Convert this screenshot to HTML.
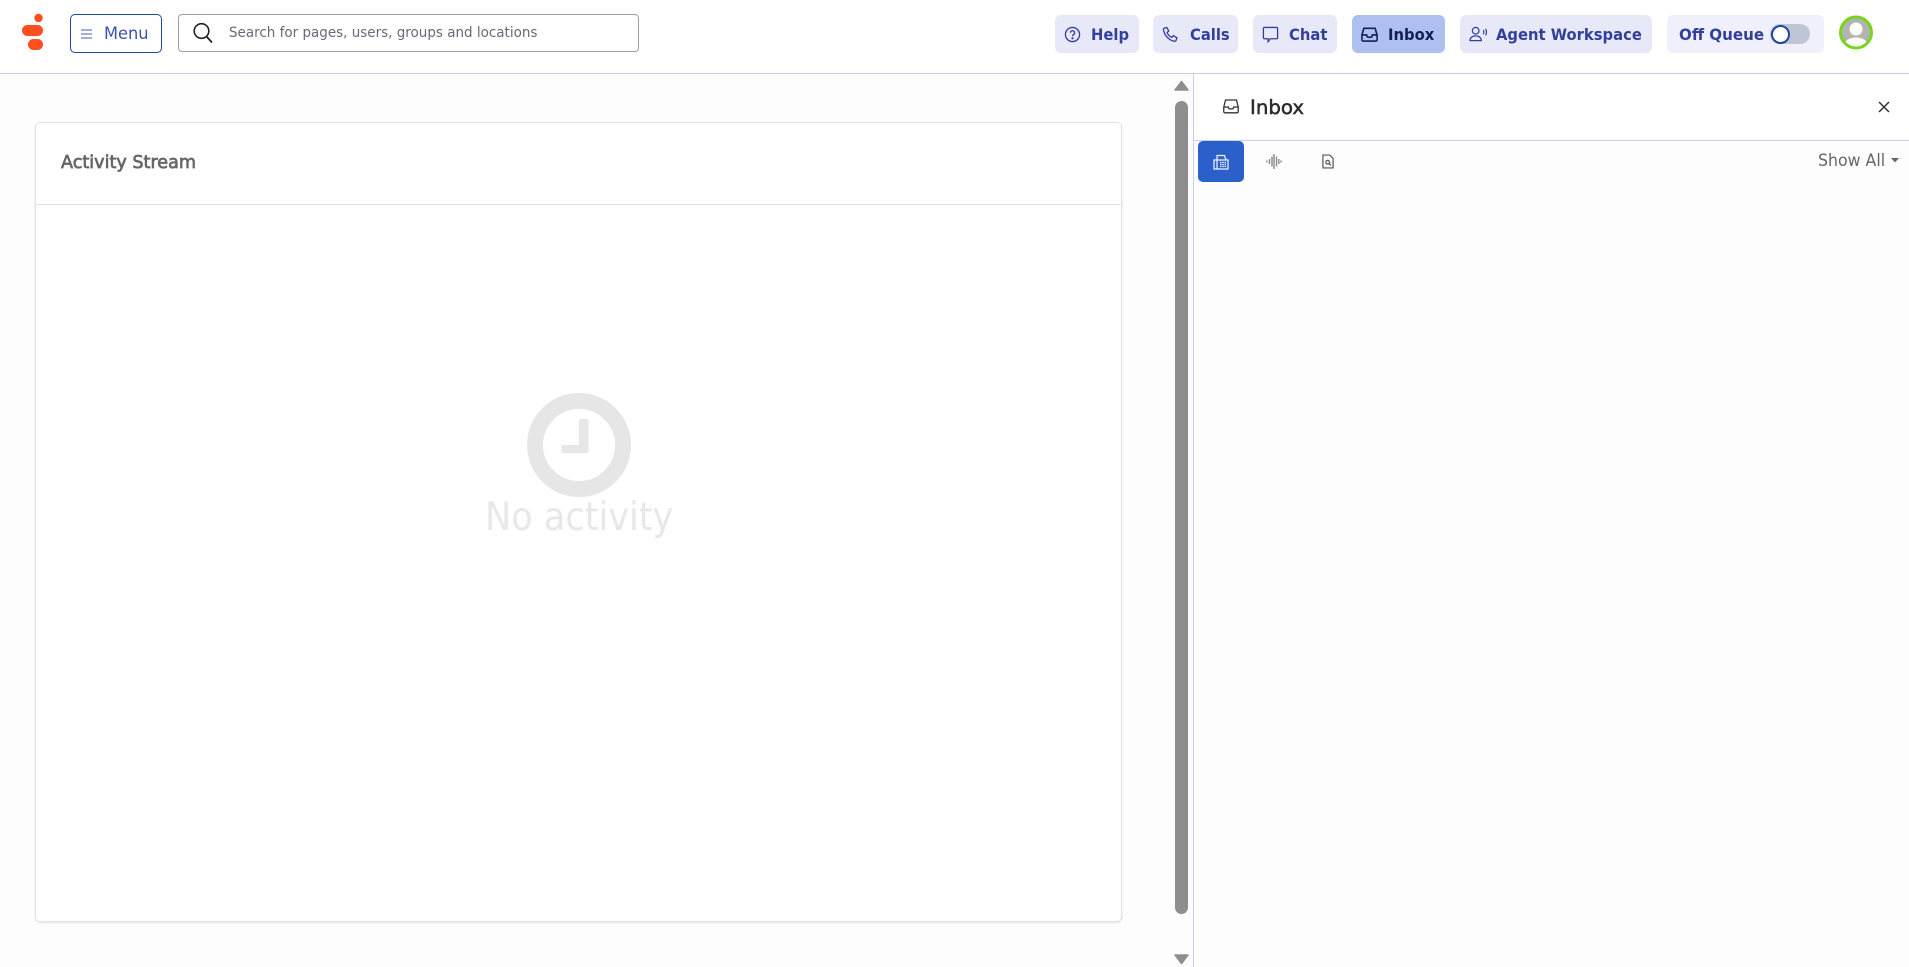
<!DOCTYPE html>
<html><head><meta charset="utf-8"><style>
*{box-sizing:border-box}
html,body{margin:0;padding:0;width:1909px;height:967px;overflow:hidden;background:#fdfdfd;font-family:"DejaVu Sans","Liberation Sans",sans-serif}
.a{position:absolute}
.btn{position:absolute;top:15px;height:38px;background:#e8e9f8;border-radius:6px;color:#33409b;font-weight:700;font-size:15.8px;line-height:39px;white-space:nowrap}
.btn svg{position:absolute;top:11px;left:9px}
.btn span{position:absolute;top:0;transform:scaleX(.935);transform-origin:0 50%}
</style></head><body>
<div class="a" style="left:0;top:0;width:1909px;height:73px;background:#fff"></div>
<div class="a" style="left:0;top:73px;width:1909px;height:1px;background:#c8d0e6"></div>
<svg class="a" style="left:20px;top:12px" width="26" height="40" viewBox="0 0 26 40"><circle cx="18.5" cy="6" r="4.2" fill="#ff4f1f"/><rect x="2" y="13" width="21" height="11" rx="5.5" fill="#ff4f1f"/><rect x="8" y="27" width="15" height="11" rx="5.5" fill="#ff4f1f"/></svg>
<div class="a" style="left:70px;top:14px;width:92px;height:39px;border:1px solid #1f45a5;border-radius:5px;background:#fff;color:#3f51ab;font-size:17px;line-height:39px"><svg class="a" style="left:9px;top:12px" width="14" height="14" viewBox="0 0 14 14"><path d="M1 3h11M1 7h11M1 11h11" stroke="#6b7cc4" stroke-width="1.3"/></svg><span class="a" style="left:33px;transform:scaleX(.955);transform-origin:0 50%">Menu</span></div>
<div class="a" style="left:178px;top:14px;width:461px;height:38px;border:1px solid #9a9fb0;border-radius:4px;background:#fff"></div>
<svg class="a" style="left:192px;top:21px" width="22" height="24" viewBox="0 0 22 24"><circle cx="9.5" cy="10" r="7.3" fill="none" stroke="#222" stroke-width="1.6"/><path d="M14.5 15.5L20 21.500" stroke="#222" stroke-width="1.800"/></svg>
<div class="a" style="left:229px;top:21px;font-size:14.6px;line-height:24px;color:#666b78;white-space:nowrap;transform:scaleX(.924);transform-origin:0 50%">Search for pages, users, groups and locations</div>

<div class="btn" style="left:1055px;width:84px"><svg width="17" height="17" viewBox="0 0 18 18" fill="none" stroke="#33409b" stroke-width="1.4"><circle cx="9" cy="9" r="7.5"/><path d="M6.800 7.200a2.200 2.200 0 1 1 3.200 2c-.7.4-1 .8-1 1.600"/><circle cx="9" cy="13" r=".5"/></svg><span style="left:36px">Help</span></div>
<div class="btn" style="left:1153px;width:85px"><svg width="17" height="17" viewBox="0 0 18 18" fill="none" stroke="#33409b" stroke-width="1.4"><path d="M2 2.500L5 1.500l2.200 3.800-1.800 1.500c.8 2.200 2.600 4.200 5 5.200l1.600-1.800 3.800 2.300-1 3c-.3.600-1 .8-1.600.7C7 15 2.500 10 1.500 3.800 1.400 3.200 1.500 2.800 2 2.500z"/></svg><span style="left:36.500px">Calls</span></div>
<div class="btn" style="left:1253px;width:84px"><svg width="17" height="17" viewBox="0 0 18 18" fill="none" stroke="#33409b" stroke-width="1.4"><path d="M2.500 1.500h13a1 1 0 0 1 1 1v10a1 1 0 0 1-1 1H9l-2.500 3v-3h-4a1 1 0 0 1-1-1v-10a1 1 0 0 1 1-1z"/></svg><span style="left:36px">Chat</span></div>
<div class="btn" style="left:1352px;width:93px;background:#adc0ef;color:#141f52"><svg width="17" height="17" viewBox="0 0 18 18" fill="none" stroke="#141f52" stroke-width="1.700"><path d="M1 9.500L3 2.500h12l2 7v5a1.500 1.500 0 0 1-1.500 1.500h-13A1.500 1.500 0 0 1 1 14.500zM1 9.500h5c0 1.500 1 2.500 3 2.500s3-1 3-2.500h5"/></svg><span style="left:36px">Inbox</span></div>
<div class="btn" style="left:1460px;width:192px"><svg width="19" height="17" viewBox="0 0 20 18" fill="none" stroke="#33409b" stroke-width="1.300"><circle cx="7" cy="5" r="3.500"/><path d="M1 15.500c0-3 2.500-5 6-5s6 2 6 5z"/><path d="M15 4.500c.8 1.200.8 3 0 4.200M17.500 3c1.300 2 1.300 5 0 7"/></svg><span style="left:36px">Agent Workspace</span></div>
<div class="btn" style="left:1667px;width:157px;background:#eff0fc"><span style="left:12px;transform:scaleX(.955)">Off Queue</span></div>
<div class="a" style="left:1770px;top:24px;width:40px;height:20px;border-radius:10px;background:#bfc5d4"></div>
<div class="a" style="left:1771px;top:25px;width:19px;height:19px;border-radius:50%;background:#fff;border:2px solid #1f45a5"></div>
<svg class="a" style="left:1839px;top:15px" width="34" height="35" viewBox="0 0 34 35"><defs><clipPath id="c"><circle cx="17" cy="17.500" r="15"/></clipPath></defs><circle cx="17" cy="17.500" r="15" fill="#b3b3b3"/><g clip-path="url(#c)" fill="#fff"><circle cx="17" cy="14" r="6.500"/><ellipse cx="17" cy="29" rx="11" ry="6.500"/></g><circle cx="17" cy="17.500" r="15.500" fill="none" stroke="#76d61d" stroke-width="3"/></svg>

<div class="a" style="left:35px;top:122px;width:1087px;height:800px;background:#fff;border:1px solid #e2e2e2;border-radius:5px;box-shadow:0 1px 2px rgba(0,0,0,.1)"></div>
<div class="a" style="left:36px;top:204px;width:1085px;height:1px;background:#dbe0e8"></div>
<div class="a" style="left:61px;top:149px;font-size:17.600px;-webkit-text-stroke:.7px #666;line-height:28px;color:#666;white-space:nowrap">Activity Stream</div>
<svg class="a" style="left:526.500px;top:393px" width="104" height="104" viewBox="0 0 104 104"><circle cx="52" cy="52" r="44" fill="none" stroke="#e6e6e6" stroke-width="16"/><path d="M36 53.500H53.500V27.500H60V58.500H36Z" fill="#e6e6e6" stroke="#e6e6e6" stroke-width="3" stroke-linejoin="round"/></svg>
<div class="a" style="left:485px;top:490px;font-size:39px;line-height:56px;color:#e8e8e8;white-space:nowrap;transform:scaleX(.9);transform-origin:0 50%">No activity</div>

<svg class="a" style="left:1174px;top:80px" width="15" height="11"><path d="M7.500 1.500L14 10H1z" fill="#8e8e8e" stroke="#8e8e8e" stroke-linejoin="round" stroke-width="1.500"/></svg>
<div class="a" style="left:1175px;top:101px;width:13px;height:813px;border-radius:6.500px;background:#8e8e8e"></div>
<svg class="a" style="left:1174px;top:954px" width="15" height="11"><path d="M1 1H14L7.500 9.500z" fill="#8e8e8e" stroke="#8e8e8e" stroke-linejoin="round" stroke-width="1.500"/></svg>

<div class="a" style="left:1193px;top:73px;width:1px;height:894px;background:#c8d0e6"></div>
<div class="a" style="left:1194px;top:74px;width:715px;height:66px;background:#fff"></div>
<div class="a" style="left:1194px;top:140px;width:715px;height:1px;background:#c9d0ea"></div>
<svg class="a" style="left:1223px;top:99px" width="16" height="15" viewBox="0 0 16 15" fill="none" stroke="#333" stroke-width="1.300"><path d="M.8 8L2.500 1h11l1.700 7v4.500a1.300 1.300 0 0 1-1.300 1.300H2a1.300 1.300 0 0 1-1.300-1.300zM.8 8h4.500c0 1.300 1 2 2.700 2s2.700-.7 2.700-2h4.500"/></svg>
<div class="a" style="left:1250px;top:93px;font-size:19.800px;-webkit-text-stroke:.5px #2b2b2b;line-height:30px;color:#2b2b2b;white-space:nowrap">Inbox</div>
<svg class="a" style="left:1878px;top:101px" width="12" height="12"><path d="M1 1l10 10M11 1L1 11" stroke="#333" stroke-width="1.500"/></svg>
<div class="a" style="left:1198px;top:141px;width:46px;height:41px;background:#2b5fc9;border-radius:5px"></div>
<svg class="a" style="left:1213px;top:154px" width="16" height="16" viewBox="0 0 16 16" fill="none" stroke="#f2f5ff" stroke-width="1.200"><path d="M1 6h14v9H1zM4 6V1.500h7.500L13 6"/><path d="M7 8.500h6M7 10.500h6M7 12.500h6" stroke-dasharray="1.500 .8"/><path d="M4 6v9"/></svg>
<svg class="a" style="left:1266px;top:153px" width="16" height="17" viewBox="0 0 16 17" fill="none" stroke="#8a8a8a" stroke-width="1.400"><path d="M1 7.500v2M3.500 6v5M6 3.500v10M8 1v15M10.500 3.500v10M12.800 6v5M15 7.500v2"/></svg>
<svg class="a" style="left:1322px;top:154px" width="12" height="15" viewBox="0 0 13 16" fill="none" stroke="#555" stroke-width="1.300"><path d="M1 1h7.500L12 4.500V15H1z"/><circle cx="6.200" cy="8.800" r="2"/><path d="M7.700 10.300l2 2"/></svg>
<div class="a" style="left:1818px;top:149px;font-size:16.600px;line-height:24px;color:#666;white-space:nowrap;transform:scaleX(.95);transform-origin:0 50%">Show All</div>
<svg class="a" style="left:1891px;top:158px" width="8" height="5"><path d="M0 0h8L4 4.500z" fill="#666"/></svg>
</body></html>
